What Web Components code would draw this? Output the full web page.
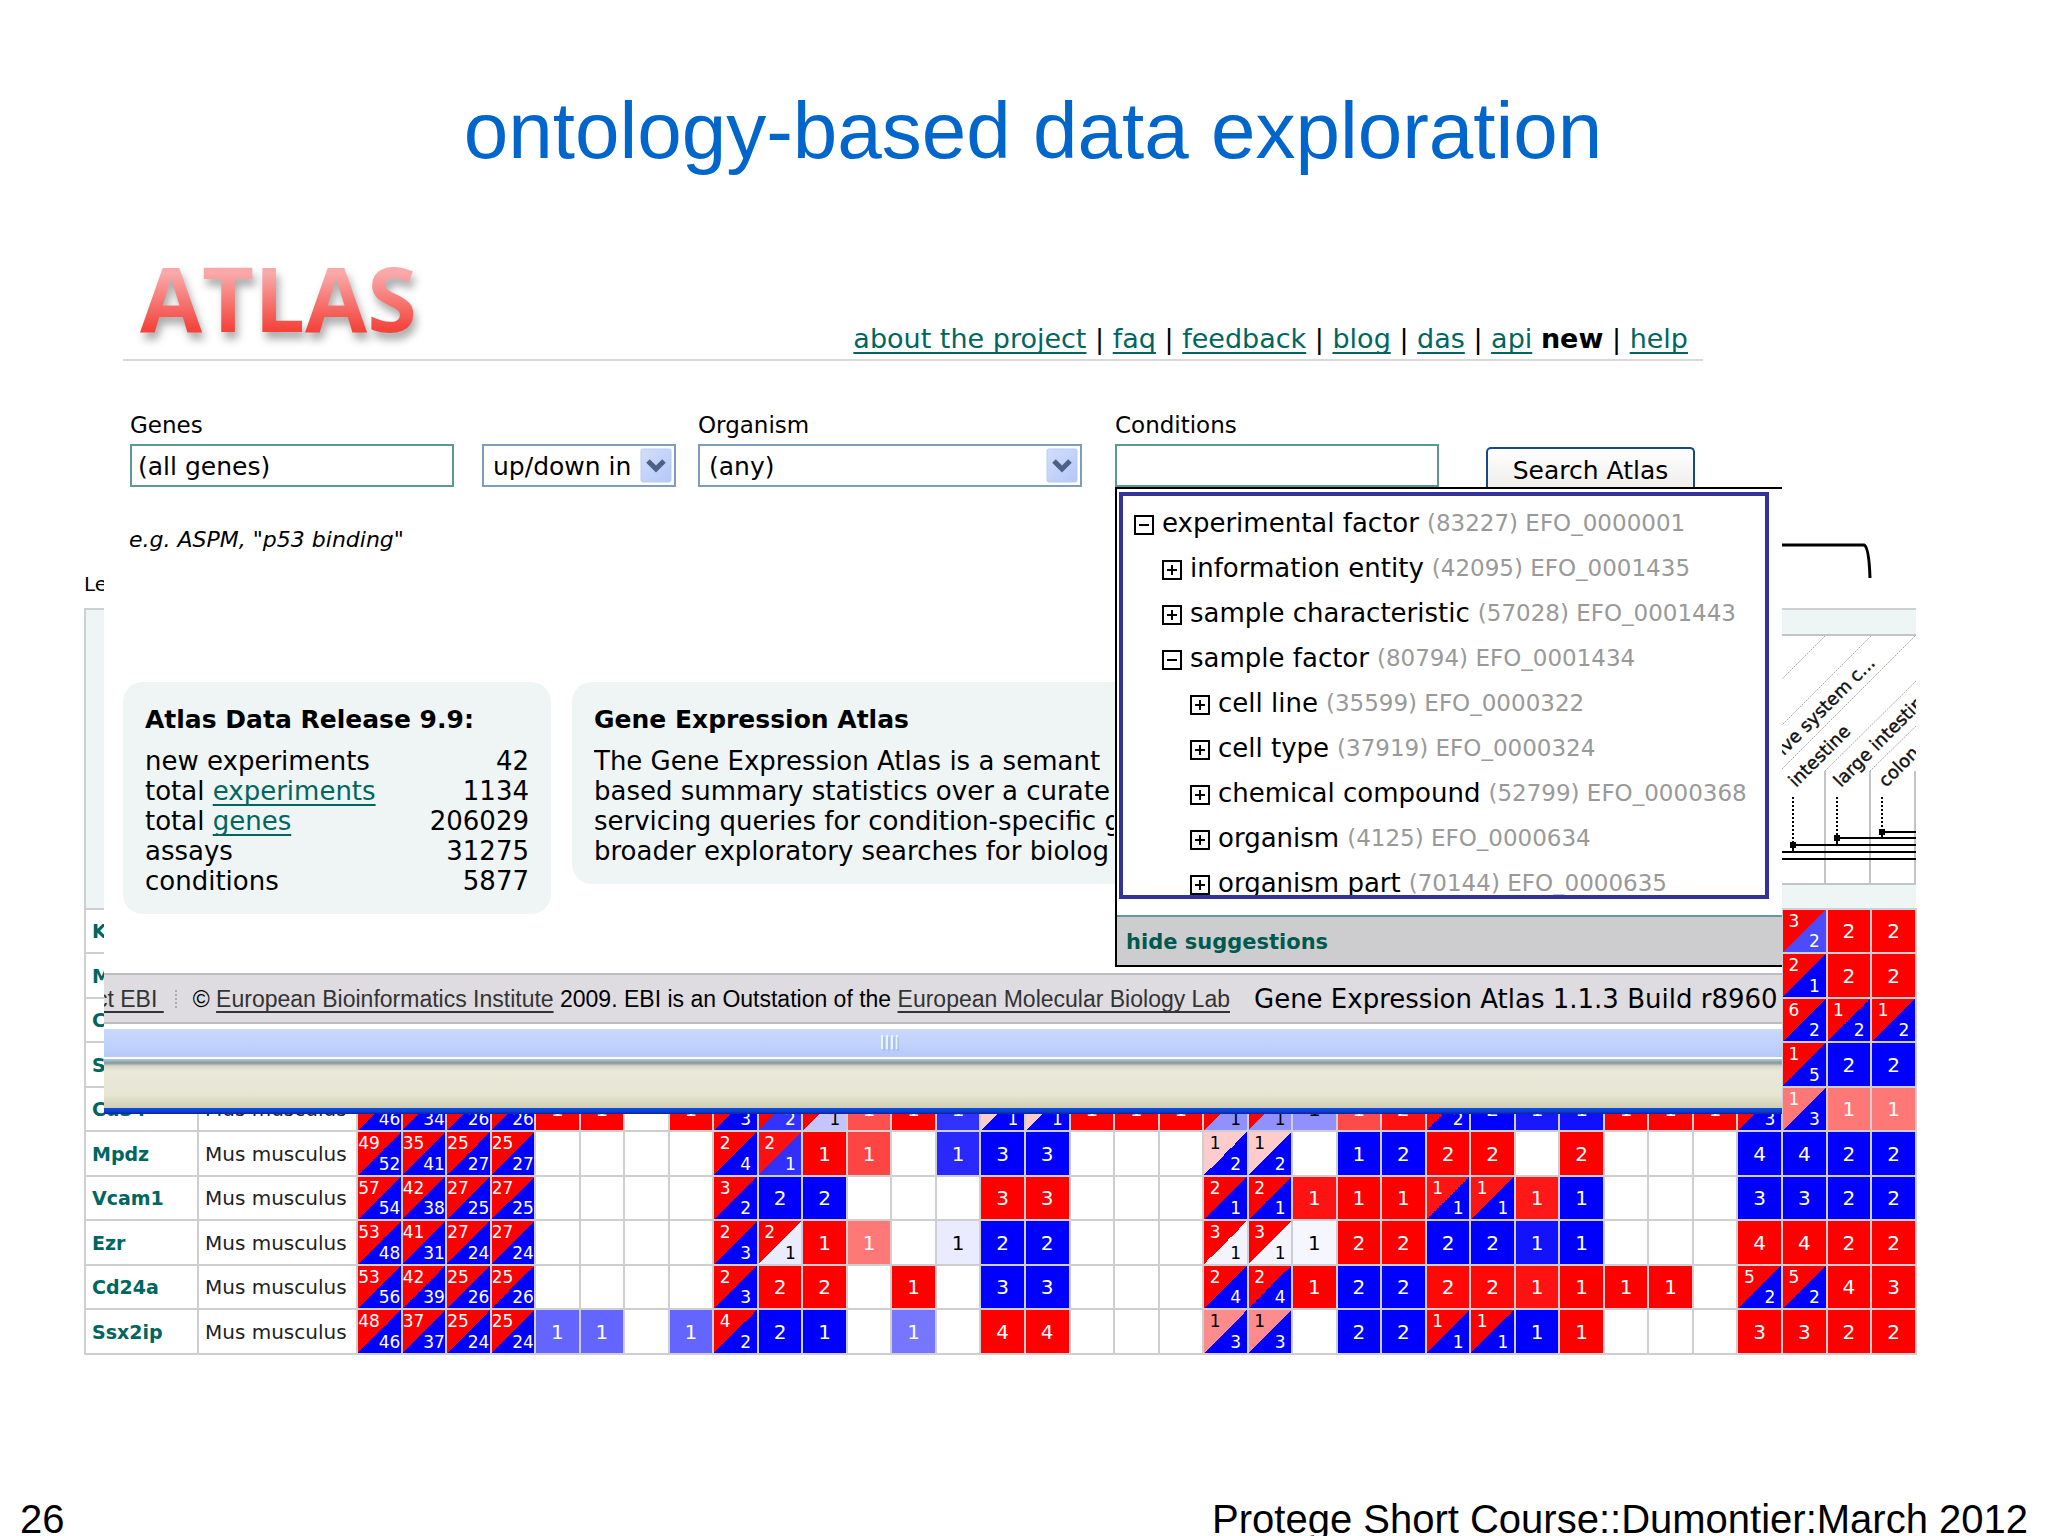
<!DOCTYPE html>
<html lang="en">
<head>
<meta charset="utf-8">
<title>ontology-based data exploration</title>
<style>
  html, body { margin: 0; height: 100%; }
  body { font-family: "DejaVu Sans", Verdana, sans-serif; color: #000; background: #fff; }
</style>
</head>
<body>
<course-slide page="26">
  <span slot="title">ontology-based data exploration</span>
  <heat-map></heat-map>
  <atlas-window></atlas-window>
  <span slot="course">Protege Short Course::Dumontier:March 2012</span>
</course-slide>

<script>
// Slide frame: title, two stacked layers, footer line
class CourseSlide extends HTMLElement {
  shadowRoot = this.attachShadow({ mode: "open" });
  connectedCallback() {
    this.shadowRoot.innerHTML = `
    <style>
      :host { display: flex; flex-direction: column; height: 100vh; overflow: hidden; background: #fff; }
      h1 { margin: 85px 0 43px 18px; font: 400 80px/92px "Liberation Sans", Arial, sans-serif; color: #0066cc; text-align: center; }
      main { display: grid; flex: 1; align-items: start; margin: 0 131px 0 84px; }
      main ::slotted(*) { grid-area: 1 / 1; }
      footer { display: flex; justify-content: space-between; height: 40px; padding: 0 20px; font: 40px/46px "Liberation Sans", Arial, sans-serif; white-space: nowrap; }
    </style>
    <h1><slot name="title"></slot></h1>
    <main><slot></slot></main>
    <footer><span>${this.getAttribute("page")}</span><slot name="course"></slot></footer>
    `;
  }
}
customElements.define("course-slide", CourseSlide);

/*
Heat map cell
- up / down: number of studies, both set = split cell
- tint-up / tint-down: hex level of the two weaker channels, 00 is the full colour
*/
class HeatCell extends HTMLElement {
  shadowRoot = this.attachShadow({ mode: "open" });
  connectedCallback() {
    var up = this.getAttribute("up");
    var down = this.getAttribute("down");
    var tintUp = this.getAttribute("tint-up") || "00";
    var tintDown = this.getAttribute("tint-down") || "00";
    var red = `#ff${tintUp}${tintUp}`;
    var blue = `#${tintDown}${tintDown}ff`;
    var split = up !== null && down !== null;
    var ink = (tint) => (parseInt(tint, 16) > 130 ? "#000" : "#fff");
    this.shadowRoot.innerHTML = `
    <style>
      :host { display: grid; box-sizing: border-box; height: 100%; font-size: 20px; line-height: 20px; text-align: center; align-content: center;
        background: ${split ? `linear-gradient(to bottom right, ${red} 50%, ${blue} 50%)` : up !== null ? red : blue}; }
      :host([split]) { padding: 1px 0; font-size: 17px; align-content: space-between; }
      :host([split]) span { width: 22px; line-height: 20px; }
      .up { color: ${ink(tintUp)}; }
      .down { color: ${ink(tintDown)}; }
      :host([split]) .down { justify-self: end; }
    </style>
    ${up !== null ? `<span class="up">${up}</span>` : ""}
    ${down !== null ? `<span class="down">${down}</span>` : ""}
    `;
  }
}
customElements.define("heat-cell", HeatCell);

// "." empty, "r2" up, "b2" down, "2/4" both; tints follow after a colon
var rows = [
  ["K", "", "32x 3/2:00:4b r2 r2"],
  ["M", "", "32x 2/1 r2 r2"],
  ["C", "", "32x 6/2 1/2 1/2"],
  ["S", "", "32x 1/5 b2 b2"],
  ["Cd34", "Mus musculus", "/46 /34 /26 /26 r1 r1 . r1 /3 /2:00:33 /1:00:c4 r1:50 r1 b1:32 /1:cc:00 /1:cc:00 r1 r1 r1 /1:00:90 /1:00:90 b1:90 r1:4a r2:10 /2 b2 b1:18 b1:10 r1 r1 r1 /3 1/3:78:00 r1:78 r1:78"],
  ["Mpdz", "Mus musculus", "49/52 35/41 25/27 25/27 4x 2/4 2/1:10:30 r1 r1:44 . b1:28 b3 b3 3x 1/2:cc:00 1/2:cc:00 . b1 b2 r2 r2 . r2 3x b4 b4 b2 b2"],
  ["Vcam1", "Mus musculus", "57/54 42/38 27/25 27/25 4x 3/2 b2 b2 3x r3 r3 3x 2/1 2/1 r1:12 r1 r1 1/1:14:00 1/1:14:00 r1:18 b1 3x b3 b3 b2 b2"],
  ["Ezr", "Mus musculus", "53/48 41/31 27/24 27/24 4x 2/3 2/1:00:eb r1 r1:78 . b1:eb b2 b2 3x 3/1:00:f4 3/1:00:f4 b1:f6 r2 r2 b2 b2 b1:12 b1 3x r4 r4 r2 r2"],
  ["Cd24a", "Mus musculus", "53/56 42/39 25/26 25/26 4x 2/3 r2 r2 . r1 . b3 b3 3x 2/4 2/4 r1 b2 b2 r2:08 r2:08 r1:12 r1 r1 r1 . 5/2 5/2 r4 r3"],
  ["Ssx2ip", "Mus musculus", "48/46 37/37 25/24 25/24 b1:64 b1:64 . b1:64 4/2 b2 b1 . b1:76 . r4 r4 3x 1/3:8c:00 1/3:8c:00 . b2 b2 1/1 1/1 b1 r1 3x r3 r3 r2 r2"],
];

function cell(token) {
  if (token === ".") return "<td></td>";
  if (token.endsWith("x")) return "<td></td>".repeat(parseInt(token));
  var [value, a = "00", b = "00"] = token.split(":");
  if (value.includes("/")) {
    var [up, down] = value.split("/");
    return `<td><heat-cell split up="${up}" down="${down}" tint-up="${a}" tint-down="${b}"></heat-cell></td>`;
  }
  var dir = value[0] === "r" ? "up" : "down";
  return `<td><heat-cell ${dir}="${value.slice(1)}" tint-${dir}="${a}"></heat-cell></td>`;
}

class HeatMap extends HTMLElement {
  shadowRoot = this.attachShadow({ mode: "open" });
  connectedCallback() {
    this.shadowRoot.innerHTML = `
    <style>
      :host { display: block; margin-top: 323px; }
      .legend { display: flex; justify-content: space-between; align-items: flex-start; height: 65px; padding-right: 44px; font-size: 20px; line-height: 24px; }
      .legend span { padding-top: 29px; }
      svg { display: block; }
      table { width: 100%; table-layout: fixed; border-collapse: collapse; font-size: 20px; line-height: 24px; }
      .gene { width: 113px; }
      .species { width: 159px; }
      th, td { padding: 0; border: 2px solid #cfcfd2; }
      thead th { height: 298px; background: #eef5f5; border-bottom-width: 1px; }
      thead th:last-child { border-width: 2px 0 0; }
      thead svg { margin-left: auto; }
      tbody tr { height: 44px; }
      tbody tr:nth-child(even) { height: 45px; }
      tbody th, .name { padding-left: 6px; text-align: left; white-space: nowrap; color: #222; }
      tbody th { font-size: 19px; }
      td { height: 42px; }
      tr:nth-child(even) td { height: 43px; }
      a { color: #006660; text-decoration: none; }
    </style>
    <div class="legend">
      <span>Le</span>
      <svg width="92" height="36" fill="none" stroke="#000" stroke-width="3"><path d="M0 2H83Q88 4 89 35"/></svg>
    </div>
    <table>
      <colgroup><col class="gene"><col class="species"><col span="35"></colgroup>
      <thead><tr><th colspan="2"></th><th colspan="35">
        <svg width="135" height="298" font-family="DejaVu Sans, Verdana, sans-serif" font-size="18" font-weight="400" fill="#111" stroke-linecap="butt">
          <path d="M0 25H135V274H0Z" fill="#fff"/>
          <path d="M0 25H135M0 274H135M44 161V274M89 161V274M134 161V274" stroke="#c4c4c8" stroke-width="2" fill="none"/>
          <path d="M44 26L0 70M90 26L0 116M134 26L0 160M135 71L44 161M135 116L89 161" stroke="#aaa" stroke-dasharray="2 1" fill="none"/>
          <g stroke="#111" stroke-width="0.4">
            <text transform="translate(95 54) rotate(-45)" text-anchor="end">ive system c...</text>
            <text transform="translate(15 178) rotate(-45)">intestine</text>
            <text transform="translate(60 178) rotate(-45)">large intestin</text>
            <text transform="translate(105 178) rotate(-45)">colon</text>
          </g>
          <path d="M12 187V233M56 187V227M101 187V221" stroke="#000" stroke-width="2" stroke-dasharray="2 2"/>
          <path d="M12 235V242M56 228V235M101 222V228M101 222H135M56 228H135M12 235H135M0 242H135M0 249H135" stroke="#000" stroke-width="2" fill="none"/>
          <path d="M9 232h6v6h-6zM53 225h6v6h-6zM98 219h6v6h-6z" fill="#000"/>
        </svg>
      </th></tr></thead>
      <tbody>
        ${rows.map(([gene, species, cells]) => `<tr><th scope="row"><a href="#${gene}">${gene}</a></th><td class="name">${species}</td>${cells.split(" ").map(cell).join("")}</tr>`).join("")}
      </tbody>
    </table>
    `;
  }
}
customElements.define("heat-map", HeatMap);

// Drop-down with the XP style arrow
class XpSelect extends HTMLElement {
  shadowRoot = this.attachShadow({ mode: "open" });
  connectedCallback() {
    this.shadowRoot.innerHTML = `
    <style>
      :host { display: grid; align-items: center; }
      select, svg { grid-area: 1 / 1; }
      select { appearance: none; box-sizing: border-box; width: 100%; height: 43px; margin: 0; padding: 2px 9px 0; border: 2px solid #7f9db9; border-radius: 0; background: #fff; color: #000; font: 25px "DejaVu Sans", Verdana, sans-serif; }
      svg { justify-self: end; margin-right: 4px; pointer-events: none; }
    </style>
    <select aria-label="${this.getAttribute("label")}"><option>${this.getAttribute("value")}</option></select>
    <svg width="32" height="35">
      <defs><linearGradient id="g" x2="1" y2="1"><stop stop-color="#d3defd"/><stop offset="1" stop-color="#b3c7f8"/></linearGradient></defs>
      <rect x="1" y="1" width="30" height="33" rx="2" fill="url(#g)" stroke="#b9caf3"/>
      <path d="M8 13l8 8 8-8" fill="none" stroke="#4d6185" stroke-width="5"/>
    </svg>
    `;
  }
}
customElements.define("xp-select", XpSelect);

// One ontology term, slot = name of the term
class EfoTerm extends HTMLElement {
  shadowRoot = this.attachShadow({ mode: "open" });
  connectedCallback() {
    var open = this.hasAttribute("open");
    this.shadowRoot.innerHTML = `
    <style>
      :host { display: flex; align-items: center; height: 45px; padding-left: 11px; font-size: 26px; line-height: 45px; white-space: nowrap; }
      :host([level="2"]) { padding-left: 39px; }
      :host([level="3"]) { padding-left: 67px; }
      button { display: flex; margin: 2px 8px 0 0; padding: 0; border: 0; background: none; }
      small { margin-left: 8px; font-size: 23px; color: #999; }
    </style>
    <button aria-label="toggle"><svg width="20" height="20" fill="none" stroke="#000" stroke-width="2"><path d="M1 1H19V19H1ZM5 10H15${open ? "" : "M10 5V15"}"/></svg></button>
    <span><slot></slot></span><small>(${this.getAttribute("count")}) ${this.getAttribute("efo")}</small>
    `;
  }
}
customElements.define("efo-term", EfoTerm);

class TermSuggestions extends HTMLElement {
  shadowRoot = this.attachShadow({ mode: "open" });
  connectedCallback() {
    this.shadowRoot.innerHTML = `
    <style>
      :host { display: block; box-sizing: border-box; border: 2px solid #000; background: #fff; }
      .tree { box-sizing: border-box; width: 650px; height: 407px; margin: 3px 0 16px 2px; padding-top: 5px; border: 4px solid #333399; overflow: hidden; }
      .bar { height: 48px; border-top: 2px solid #5f9a9a; background: #cdcdcf; }
      button { padding: 0 9px; border: 0; background: none; font: 700 21px/50px "DejaVu Sans", Verdana, sans-serif; color: #00594f; }
    </style>
    <div class="tree">
      <efo-term open count="83227" efo="EFO_0000001">experimental factor</efo-term>
      <efo-term level="2" count="42095" efo="EFO_0001435">information entity</efo-term>
      <efo-term level="2" count="57028" efo="EFO_0001443">sample characteristic</efo-term>
      <efo-term level="2" open count="80794" efo="EFO_0001434">sample factor</efo-term>
      <efo-term level="3" count="35599" efo="EFO_0000322">cell line</efo-term>
      <efo-term level="3" count="37919" efo="EFO_0000324">cell type</efo-term>
      <efo-term level="3" count="52799" efo="EFO_0000368">chemical compound</efo-term>
      <efo-term level="3" count="4125" efo="EFO_0000634">organism</efo-term>
      <efo-term level="3" count="70144" efo="EFO_0000635">organism part</efo-term>
    </div>
    <div class="bar"><button>hide suggestions</button></div>
    `;
  }
}
customElements.define("term-suggestions", TermSuggestions);

class InfoCard extends HTMLElement {
  shadowRoot = this.attachShadow({ mode: "open" });
  connectedCallback() {
    this.shadowRoot.innerHTML = `
    <style>
      :host { display: block; box-sizing: border-box; padding: 23px 22px 18px; border-radius: 20px; background: #eff4f5; font-size: 26px; line-height: 30px; }
      h2 { margin: 0 0 11px; font-size: 25px; line-height: 30px; white-space: nowrap; }
    </style>
    <h2>${this.getAttribute("heading")}</h2>
    <slot></slot>
    `;
  }
}
customElements.define("info-card", InfoCard);

// The browser window with the Atlas start page
class AtlasWindow extends HTMLElement {
  shadowRoot = this.attachShadow({ mode: "open" });
  connectedCallback() {
    this.shadowRoot.innerHTML = `
    <style>
      :host { display: block; position: relative; margin: 0 135px 0 20px; overflow: hidden; background: #fff; }
      a { color: #006660; text-decoration-thickness: 2px; text-underline-offset: 4px; text-decoration-skip-ink: none; }
      header { display: flex; justify-content: space-between; align-items: flex-end; box-sizing: border-box; height: 141px; margin: 0 79px 0 19px; padding: 0 15px 0 17px; border-bottom: 2px solid #d9d9dd; }
      .logo { padding-bottom: 17px; font: 700 90px/90px "Open Sans", "Noto Sans", sans-serif; color: transparent; background: linear-gradient(#f9a9a9 20%, #f4443c 72%); -webkit-background-clip: text; background-clip: text; filter: drop-shadow(3px 7px 4px #aaa); }
      nav { padding-bottom: 3px; font-size: 27px; line-height: 34px; white-space: nowrap; }
      form { display: flex; align-items: flex-end; margin: 50px 0 0 26px; }
      .field { display: flex; flex-direction: column; gap: 5px; }
      .field.wide { width: 324px; }
      .field.mode { width: 194px; margin: 0 22px 0 28px; }
      .field.organism { width: 384px; margin-right: 33px; }
      label { font-size: 23px; line-height: 28px; }
      input { box-sizing: border-box; width: 100%; height: 43px; margin: 0; padding: 2px 6px 0; border: 2px solid #5a9a90; background: #fff; font: 25px "DejaVu Sans", Verdana, sans-serif; color: #000; }
      .search { width: 209px; height: 40px; margin-left: 47px; padding: 4px 0 0; border: 2px solid #164a85; border-bottom: 0; border-radius: 5px 5px 0 0; background: linear-gradient(#fff, #efeeeb); font: 25px "DejaVu Sans", Verdana, sans-serif; color: #000; white-space: nowrap; }
      .conditions { position: relative; }
      term-suggestions { position: absolute; top: 100%; left: 0; width: 700px; }
      .example { margin: 39px 0 128px 25px; font-size: 22px; line-height: 28px; font-style: italic; }
      .cards { display: flex; align-items: flex-start; gap: 21px; margin: 0 79px 59px 19px; }
      .release { width: 428px; flex: none; }
      .about { flex: 1; }
      .about p { width: 520px; margin: 0; overflow: hidden; white-space: nowrap; }
      table { width: 100%; border-collapse: collapse; }
      th, td { padding: 0; font-weight: 400; text-align: left; }
      td { text-align: right; }
      .ebi { display: flex; align-items: center; box-sizing: border-box; height: 51px; padding-top: 1px; border: solid #bdbcbf; border-width: 2px 0; background: #dedce0; font: 23px "Liberation Sans", Arial, sans-serif; white-space: nowrap; }
      .ebi a { color: #333; }
      .contact { margin-left: -8px; white-space: pre; }
      .dots { height: 18px; margin: 0 16px 0 11px; border-left: 2px dotted #aaa; }
      .build { margin-left: 24px; font: 26px "DejaVu Sans", Verdana, sans-serif; }
      .scroll { display: flex; justify-content: center; align-items: center; height: 28px; margin: 5px 0 2px; padding-right: 106px; background: linear-gradient(#cbd8fd, #c1d2fd 50%, #b6caf7); }
      .status { height: 49px; background: linear-gradient(#b5cbe0, #84969c 4px, #d8d6c6 7px, #e9e8d9 12px, #e7e6d4 36px, #cfceb4); }
      .edge { height: 6px; background: linear-gradient(#0b50e0, #0a3cd0 60%, #0a229c); }
    </style>
    <header>
      <div class="logo">ATLAS</div>
      <nav><a href="#about">about the project</a> | <a href="#faq">faq</a> | <a href="#feedback">feedback</a> | <a href="#blog">blog</a> | <a href="#das">das</a> | <a href="#api">api</a> <b>new</b> | <a href="#help">help</a></nav>
    </header>
    <form>
      <div class="field wide"><label for="genes">Genes</label><input id="genes" value="(all genes)"></div>
      <div class="field mode"><xp-select label="Expression" value="up/down in"></xp-select></div>
      <div class="field organism"><label>Organism</label><xp-select label="Organism" value="(any)"></xp-select></div>
      <div class="field wide conditions"><label for="conditions">Conditions</label><input id="conditions"><term-suggestions></term-suggestions></div>
      <button class="search" type="button">Search Atlas</button>
    </form>
    <p class="example">e.g. ASPM, "p53 binding"</p>
    <div class="cards">
      <info-card class="release" heading="Atlas Data Release 9.9:">
        <table>
          <tr><th>new experiments</th><td>42</td></tr>
          <tr><th>total <a href="#experiments">experiments</a></th><td>1134</td></tr>
          <tr><th>total <a href="#genes">genes</a></th><td>206029</td></tr>
          <tr><th>assays</th><td>31275</td></tr>
          <tr><th>conditions</th><td>5877</td></tr>
        </table>
      </info-card>
      <info-card class="about" heading="Gene Expression Atlas">
        <p>The Gene Expression Atlas is a semant<br>based summary statistics over a curate<br>servicing queries for condition-specific g<br>broader exploratory searches for biolog</p>
      </info-card>
    </div>
    <div class="ebi">
      <a class="contact" href="#contact">ct EBI </a><span class="dots"></span>
      <span>© <a href="#ebi">European Bioinformatics Institute</a> 2009. EBI is an Outstation of the <a href="#embl">European Molecular Biology Lab</a></span>
      <span class="build">Gene Expression Atlas 1.1.3 Build r8960</span>
    </div>
    <div class="scroll"><svg width="18" height="16"><path d="M1 0V14M6 0V14M11 0V14M16 0V14" stroke="#eef4fe" stroke-width="2"/><path d="M3 2V16M8 2V16M13 2V16M17 2V16" stroke="#8cb0f8" stroke-width="1"/></svg></div>
    <div class="status"></div>
    <div class="edge"></div>
    `;
  }
}
customElements.define("atlas-window", AtlasWindow);
</script>
</body>
</html>
